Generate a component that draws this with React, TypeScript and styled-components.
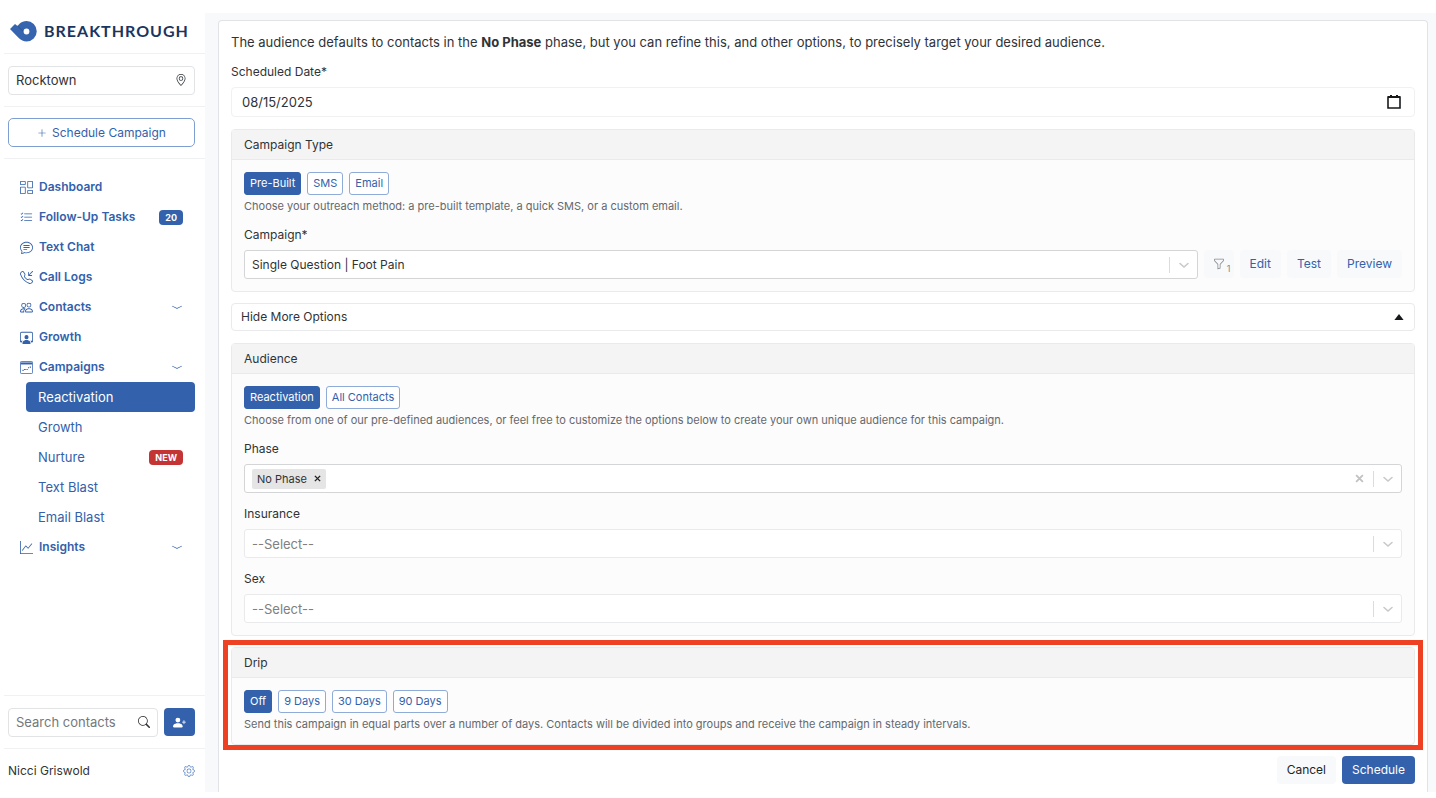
import React, { useState } from "react";
import styled, { createGlobalStyle, css } from "styled-components";
import {
  BsChatText, BsChevronCompactDown, BsColumnsGap, BsFunnel, BsGear, BsGeoAlt,
  BsGraphUp, BsListCheck, BsPeople, BsPersonPlusFill, BsPersonWorkspace, BsPlusLg,
  BsSearch, BsTelephoneInbound,
} from "react-icons/bs";

const blue = "#3361ab";
const line = "#e9eaec";

const GlobalStyle = createGlobalStyle`
  * { box-sizing: border-box; }
  body {
    margin: 0;
    background: #fff;
    color: #2f3337;
    font: 400 12px/18px Inter, "Open Sans", sans-serif;
  }
  button, input, select { font: inherit; color: inherit; }
  button { cursor: pointer; }
  h2, p { margin: 0; font: inherit; }
`;

const Page = styled.div`
  display: flex;
  min-height: 100vh;
  padding: 13px 0 6px 4px;
`;

const Sidebar = styled.aside`
  display: flex;
  flex-direction: column;
  flex: none;
  width: 201px;
`;

const Section = styled.div<{ $height: number; $top?: boolean }>`
  display: flex;
  align-items: center;
  gap: 6px;
  height: ${(p) => p.$height}px;
  padding: 0 10px 0 4px;
  border: 0 solid #f0f1f2;
  border-width: ${(p) => (p.$top ? "1px 0 0" : "0 0 1px")};
`;

const Brand = styled.a`
  display: flex;
  align-items: center;
  gap: 7px;
  padding: 0 2px 4px;
  color: #1b355e;
  font: 700 16px/20px Lato, sans-serif;
  letter-spacing: 1px;
  text-decoration: none;
`;

const FieldBox = styled.div`
  display: flex;
  flex: 1;
  align-items: center;
  min-width: 0;
  height: 29px;
  padding: 0 7px;
  border: 1px solid #e1e3e5;
  border-radius: 4px;
  background: #fff;
`;

const PlainInput = styled.input`
  flex: 1;
  width: 0;
  min-width: 0;
  padding: 0;
  border: 0;
  outline: 0;
  background: transparent;
  font-size: 13px;
  &::placeholder { color: #74787c; opacity: 1; }
`;

const OutlineButton = styled.button`
  display: flex;
  flex: 1;
  align-items: center;
  justify-content: center;
  gap: 5px;
  height: 29px;
  border: 1px solid #7f9fd2;
  border-radius: 5px;
  background: #fff;
  color: ${blue};
`;

const AddButton = styled.button`
  display: grid;
  place-items: center;
  width: 31px;
  height: 28px;
  padding: 0;
  border: 0;
  border-radius: 4px;
  background: ${blue};
  color: #fff;
`;

const IconButton = styled.button`
  display: grid;
  place-items: center;
  padding: 0;
  border: 0;
  background: none;
`;

const Nav = styled.nav`
  flex: 1;
  padding: 13px 10px 12px 4px;
`;

const NavLink = styled.a<{ $sub?: boolean; $active?: boolean }>`
  display: flex;
  align-items: center;
  gap: 6px;
  height: 30px;
  padding: 0 12px;
  border-radius: 4px;
  color: ${blue};
  font-weight: 600;
  text-decoration: none;
  ${(p) => p.$sub && css`
    margin-left: 18px;
    font-size: 13px;
    font-weight: 400;
  `}
  ${(p) => p.$active && css`
    background: ${blue};
    color: #fff;
  `}
`;

const NavText = styled.span`
  flex: 1;
`;

const Badge = styled.span<{ $red?: boolean }>`
  padding: 0 6px;
  border-radius: 4px;
  background: ${(p) => (p.$red ? "#c43434" : blue)};
  color: #fff;
  font-size: 9px;
  font-weight: 700;
  line-height: 15px;
`;

const UserName = styled.span`
  flex: 1;
`;

const Main = styled.main`
  display: flex;
  flex: 1;
  min-width: 0;
  padding: 7px 8px 0 13px;
  background: #f8f9fb;
`;

const Card = styled.form`
  display: flex;
  flex: 1;
  flex-direction: column;
  min-width: 0;
  padding: 12px 12px 8px;
  border: 1px solid #e1e3e6;
  border-bottom: 0;
  border-radius: 4px 4px 0 0;
  background: #fff;
`;

const Intro = styled.p`
  font-size: 13px;
`;

const Label = styled.label`
  display: block;
  margin: 12px 0 6px;
`;

const DateBox = styled(FieldBox)`
  flex: none;
  height: 30px;
  padding: 0 13px 0 10px;
  border-color: #f0f1f2;
`;

const Panel = styled.section`
  margin-top: 12px;
  border: 1px solid ${line};
  border-radius: 4px;
  background: #fcfcfc;
`;

const PanelTitle = styled.h2`
  padding: 6px 12px 5px;
  border-bottom: 1px solid ${line};
  background: #f4f4f4;
`;

const PanelBody = styled.div`
  padding: 12px;
`;

const Choices = styled.div`
  display: flex;
  gap: 6px;
`;

const Choice = styled.button<{ $on: boolean }>`
  height: 23px;
  padding: 0 5px;
  border: 1px solid ${(p) => (p.$on ? blue : "#8fabd8")};
  border-radius: 3px;
  background: ${(p) => (p.$on ? blue : "#fff")};
  color: ${(p) => (p.$on ? "#fff" : blue)};
  font-size: 11px;
  line-height: 15px;
`;

const Hint = styled.p`
  margin-top: 3px;
  color: #65686c;
  font-size: 11px;
  line-height: 16px;
`;

const Row = styled.div`
  display: flex;
  gap: 6px;
`;

const SelectBox = styled(FieldBox)<{ $strong?: boolean }>`
  flex: 1;
  border-color: ${(p) => (p.$strong ? "#d4d5d6" : "#e9eaeb")};
  border-radius: 3px;
`;

const NativeSelect = styled.select<{ $muted?: boolean }>`
  flex: 1;
  min-width: 0;
  align-self: stretch;
  padding: 0;
  border: 0;
  outline: 0;
  appearance: none;
  background: transparent;
  color: ${(p) => (p.$muted ? "#808080" : "inherit")};
  font-size: ${(p) => (p.$muted ? 13 : 12)}px;
`;

const Divider = styled.span`
  width: 1px;
  height: 16px;
  margin: 0 8px 0 9px;
  background: #dcdcdc;
`;

const Tag = styled.span`
  display: flex;
  align-items: center;
  gap: 7px;
  height: 20px;
  padding: 0 5px;
  border-radius: 2px;
  background: #e5e5e5;
  font-size: 11px;
`;

const SoftButton = styled.button<{ $dark?: boolean }>`
  height: 28px;
  padding: 0 10px;
  border: 0;
  border-radius: 4px;
  background: #f8f9fb;
  color: ${(p) => (p.$dark ? "#212529" : blue)};
`;

const FilterButton = styled(SoftButton)`
  display: flex;
  align-items: center;
  gap: 2px;
  padding: 0 3px 0 9px;
  color: #85888c;
  font-size: 9px;
`;

const FilterCount = styled.span`
  align-self: flex-end;
`;

const Toggle = styled.button`
  display: flex;
  align-items: center;
  justify-content: space-between;
  height: 28px;
  margin-top: 11px;
  padding: 0 10px 0 9px;
  border: 1px solid ${line};
  border-radius: 4px;
  background: #fff;
`;

const Highlight = styled.div`
  margin: 4px -8px 0;
  padding: 2px 3px 0;
  border: 5px solid #ee4023;
  ${Panel} { margin: 0; }
`;

const Actions = styled.div`
  display: flex;
  justify-content: flex-end;
  gap: 6px;
  margin-top: 6px;
`;

const PrimaryButton = styled(SoftButton)`
  background: ${blue};
  color: #fff;
`;

const Logo = () => (
  <svg width="27" height="21" viewBox="0 0 27 21" aria-hidden="true">
    <path d="M0 8 5 3 7.500 5 9.500 2.800C11.500 1 14 0 16.500 0a10.200 10.200 0 0 1 0 20.500c-3 0-5.500-1.300-7.500-3.200z" fill="#3764ae" />
    <path d="m7.500 5 6.500 6" stroke="#234b8c" strokeWidth="1" opacity=".6" />
    <circle cx="16.500" cy="10.500" r="2.900" fill="#fff" />
  </svg>
);

const CampaignIcon = () => (
  <svg width="13" height="13" viewBox="0 0 16 16" fill="none" stroke="currentColor" aria-hidden="true">
    <rect x=".5" y=".5" width="15" height="15" rx="1.5" />
    <path d="M1 3h14" strokeWidth="2.500" />
    <path d="M3 11.500h1.500M5 10.500h2M8 10.500h1.500M10 8.500l1-.5M12 7.500h1.500" strokeWidth="1.400" />
  </svg>
);

const Chevron = () => (
  <svg width="12" height="12" viewBox="0 0 12 12" fill="none" stroke="#c9c9c9" strokeWidth="1.600" strokeLinecap="round" aria-hidden="true">
    <path d="m2 4.500 4 3.500 4-3.500" />
  </svg>
);

const Cross = ({ size, color }: { size: number; color: string }) => (
  <svg width={size} height={size} viewBox="0 0 8 8" stroke={color} strokeWidth="1.6" aria-hidden="true">
    <path d="m1 1 6 6M7 1 1 7" />
  </svg>
);

const CalendarIcon = () => (
  <svg width="14" height="14" viewBox="0 0 14 14" fill="none" stroke="#17191b" aria-hidden="true">
    <path d="M1 2h12v11H1z" strokeWidth="1.6" />
    <path d="M1 2h12M4 0v3M10 0v3" strokeWidth="2" />
  </svg>
);

const nav = [
  { text: "Dashboard", icon: <BsColumnsGap size={13} /> },
  { text: "Follow-Up Tasks", icon: <BsListCheck size={13} />, badge: "20" },
  { text: "Text Chat", icon: <BsChatText size={13} /> },
  { text: "Call Logs", icon: <BsTelephoneInbound size={13} /> },
  { text: "Contacts", icon: <BsPeople size={13} />, menu: true },
  { text: "Growth", icon: <BsPersonWorkspace size={13} /> },
  { text: "Campaigns", icon: <CampaignIcon />, menu: true },
  { text: "Reactivation", sub: true, active: true },
  { text: "Growth", sub: true },
  { text: "Nurture", sub: true, badge: "NEW", red: true },
  { text: "Text Blast", sub: true },
  { text: "Email Blast", sub: true },
  { text: "Insights", icon: <BsGraphUp size={13} />, menu: true },
];

function ChoiceGroup({ options, label }: { options: string[]; label: string }) {
  const [picked, setPicked] = useState(options[0]);
  return (
    <Choices role="group" aria-label={label}>
      {options.map((o) => (
        <Choice key={o} type="button" $on={o === picked} aria-pressed={o === picked} onClick={() => setPicked(o)}>
          {o}
        </Choice>
      ))}
    </Choices>
  );
}

function Select({ id, value, muted, strong }: { id: string; value: string; muted?: boolean; strong?: boolean }) {
  return (
    <SelectBox $strong={strong}>
      <NativeSelect id={id} $muted={muted}>
        <option>{value}</option>
      </NativeSelect>
      <Divider />
      <Chevron />
    </SelectBox>
  );
}

export default function App() {
  const [open, setOpen] = useState(true);
  const [tagged, setTagged] = useState(true);
  return (
    <Page>
      <GlobalStyle />
      <Sidebar>
        <Section $height={41}>
          <Brand href="#"><Logo />BREAKTHROUGH</Brand>
        </Section>
        <Section $height={53}>
          <FieldBox>
            <PlainInput aria-label="Location" defaultValue="Rocktown" />
            <BsGeoAlt size={12} />
          </FieldBox>
        </Section>
        <Section $height={52}>
          <OutlineButton type="button"><BsPlusLg size={10} />Schedule Campaign</OutlineButton>
        </Section>
        <Nav>
          {nav.map((n, i) => (
            <NavLink key={i} href="#" $sub={n.sub} $active={n.active}>
              {n.icon}
              <NavText>{n.text}</NavText>
              {n.badge && <Badge $red={n.red}>{n.badge}</Badge>}
              {n.menu && <BsChevronCompactDown size={12} />}
            </NavLink>
          ))}
        </Nav>
        <Section $height={53} $top>
          <FieldBox>
            <PlainInput type="search" aria-label="Search contacts" placeholder="Search contacts" />
            <BsSearch size={12} />
          </FieldBox>
          <AddButton type="button" aria-label="Add contact"><BsPersonPlusFill size={13} /></AddButton>
        </Section>
        <Section $height={44} $top>
          <UserName>Nicci Griswold</UserName>
          <IconButton type="button" aria-label="Settings"><BsGear size={12} color="#5f86c6" /></IconButton>
        </Section>
      </Sidebar>
      <Main>
        <Card onSubmit={(e) => e.preventDefault()}>
          <Intro>
            The audience defaults to contacts in the <b>No Phase</b> phase, but you can refine this, and other
            options, to precisely target your desired audience.
          </Intro>
          <Label htmlFor="date">Scheduled Date*</Label>
          <DateBox>
            <PlainInput id="date" defaultValue="08/15/2025" />
            <CalendarIcon />
          </DateBox>
          <Panel>
            <PanelTitle>Campaign Type</PanelTitle>
            <PanelBody>
              <ChoiceGroup label="Campaign Type" options={["Pre-Built", "SMS", "Email"]} />
              <Hint>Choose your outreach method: a pre-built template, a quick SMS, or a custom email.</Hint>
              <Label htmlFor="campaign">Campaign*</Label>
              <Row>
                <Select id="campaign" value="Single Question | Foot Pain" strong />
                <FilterButton type="button" aria-label="Filters, 1 active">
                  <BsFunnel size={12} /><FilterCount>1</FilterCount>
                </FilterButton>
                <SoftButton type="button">Edit</SoftButton>
                <SoftButton type="button">Test</SoftButton>
                <SoftButton type="button">Preview</SoftButton>
              </Row>
            </PanelBody>
          </Panel>
          <Toggle type="button" aria-expanded={open} onClick={() => setOpen(!open)}>
            {open ? "Hide More Options" : "Show More Options"}
            <svg width="10" height="6" viewBox="0 0 10 6" aria-hidden="true">
              <path d={open ? "M5 0 9.600 6H.4z" : "M5 6 9.600 0H.4z"} fill="#17191b" />
            </svg>
          </Toggle>
          {open && (
            <>
              <Panel>
                <PanelTitle>Audience</PanelTitle>
                <PanelBody>
                  <ChoiceGroup label="Audience" options={["Reactivation", "All Contacts"]} />
                  <Hint>
                    Choose from one of our pre-defined audiences, or feel free to customize the options below to
                    create your own unique audience for this campaign.
                  </Hint>
                  <Label htmlFor="phase">Phase</Label>
                  <SelectBox $strong>
                    {tagged && (
                      <Tag>
                        No Phase
                        <IconButton type="button" aria-label="Remove No Phase" onClick={() => setTagged(false)}>
                          <Cross size={7} color="#222" />
                        </IconButton>
                      </Tag>
                    )}
                    <PlainInput id="phase" />
                    <IconButton type="button" aria-label="Clear phase" onClick={() => setTagged(false)}>
                      <Cross size={9} color="#c2c2c2" />
                    </IconButton>
                    <Divider />
                    <Chevron />
                  </SelectBox>
                  <Label htmlFor="insurance">Insurance</Label>
                  <Select id="insurance" value="--Select--" muted />
                  <Label htmlFor="sex">Sex</Label>
                  <Select id="sex" value="--Select--" muted />
                </PanelBody>
              </Panel>
              <Highlight>
                <Panel>
                  <PanelTitle>Drip</PanelTitle>
                  <PanelBody>
                    <ChoiceGroup label="Drip" options={["Off", "9 Days", "30 Days", "90 Days"]} />
                    <Hint>
                      Send this campaign in equal parts over a number of days. Contacts will be divided into groups
                      and receive the campaign in steady intervals.
                    </Hint>
                  </PanelBody>
                </Panel>
              </Highlight>
            </>
          )}
          <Actions>
            <SoftButton type="button" $dark>Cancel</SoftButton>
            <PrimaryButton type="submit">Schedule</PrimaryButton>
          </Actions>
        </Card>
      </Main>
    </Page>
  );
}
